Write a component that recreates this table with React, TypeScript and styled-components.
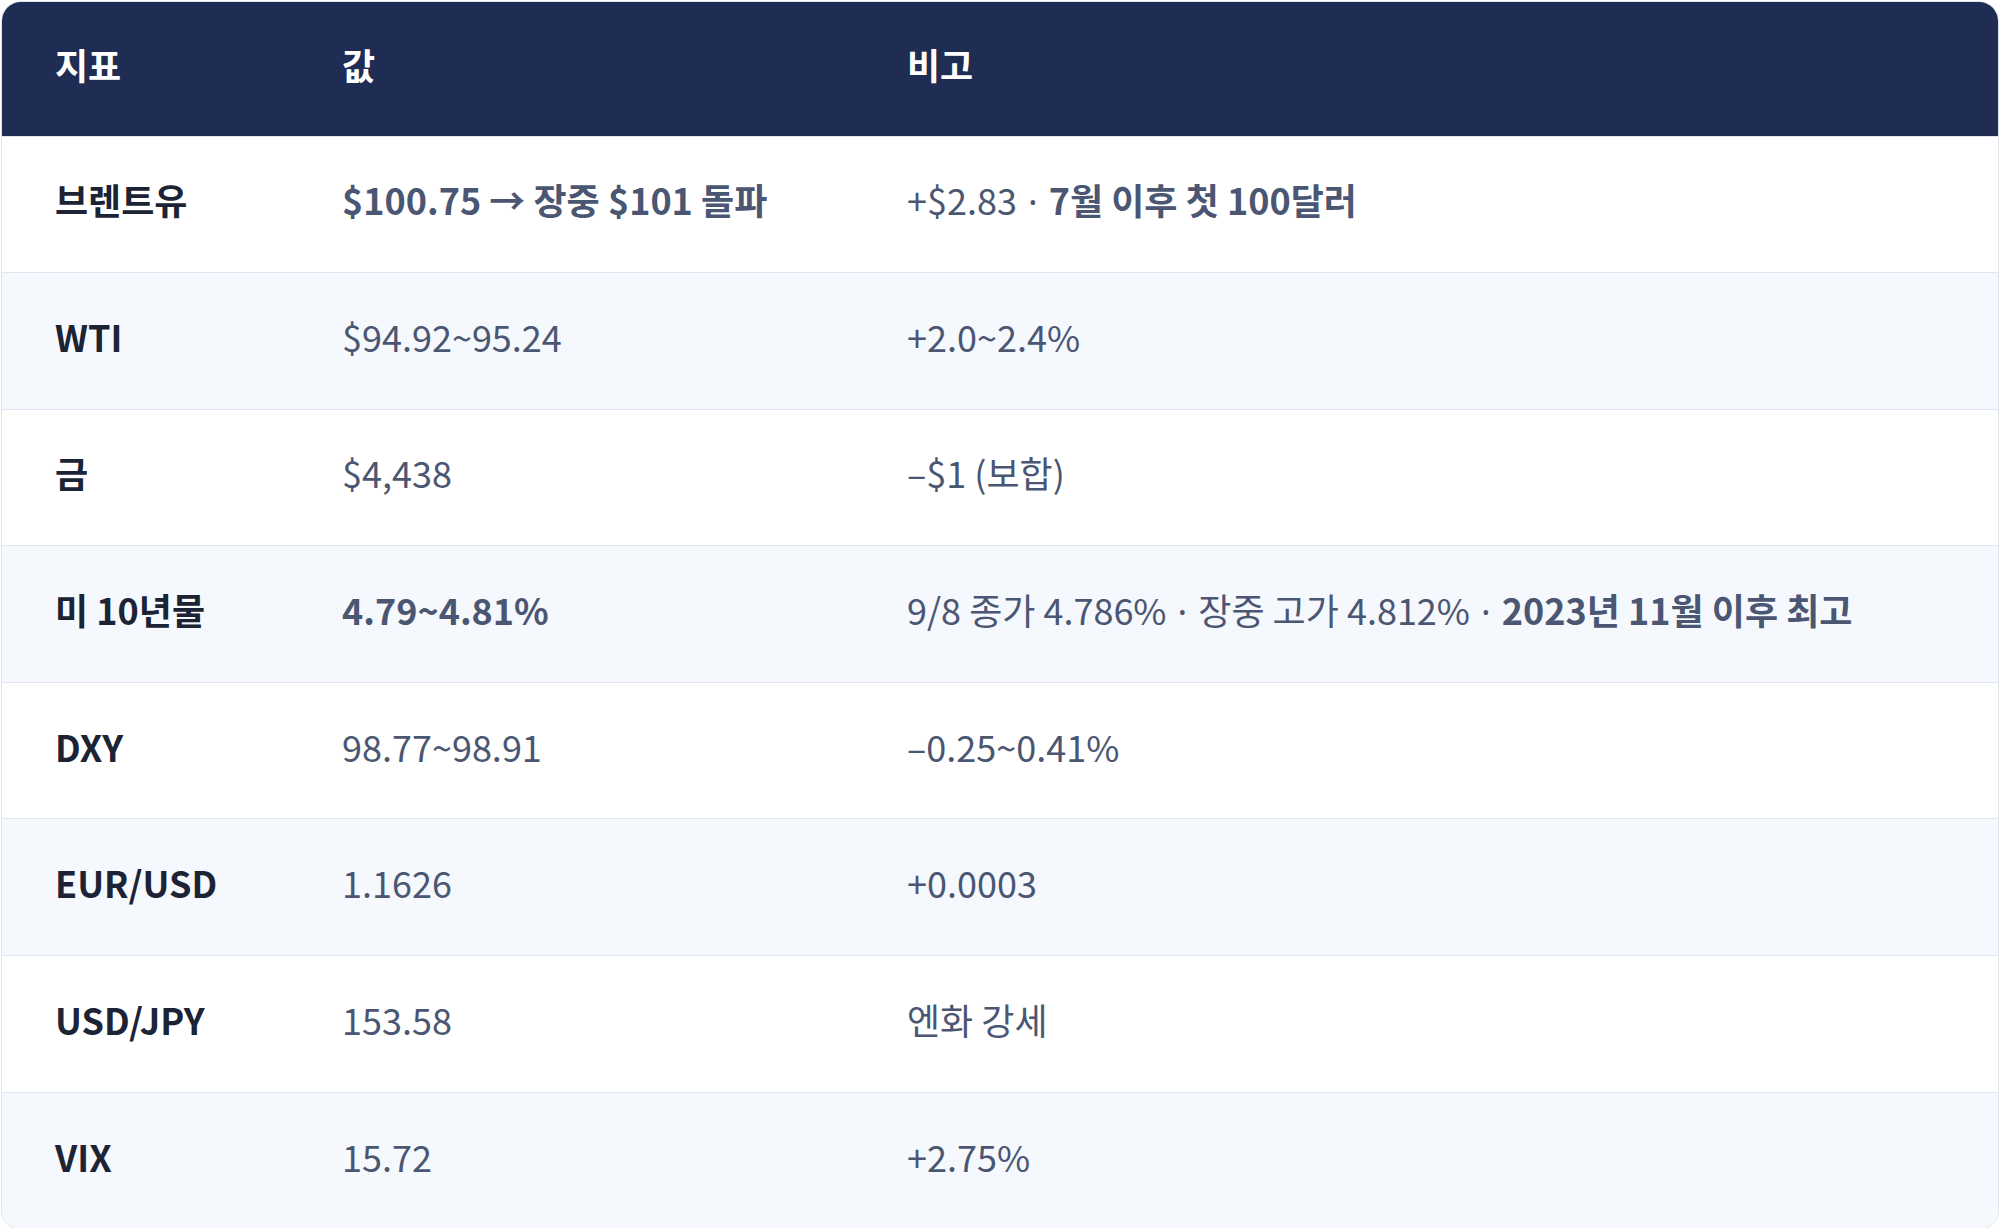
import React from "react";
import styled, { createGlobalStyle } from "styled-components";

const Global = createGlobalStyle`
  html, body { margin: 0; padding: 0; background: #ffffff; }
  body { font-family: "Noto Sans CJK KR", "Noto Sans", sans-serif; }
`;

const Frame = styled.div`
  margin: 1px 1px 1px 1px;
  border: 1px solid #dfe5ef;
  border-radius: 20px;
  overflow: hidden;
  background: #ffffff;
`;

const Table = styled.table`
  width: 100%;
  border-collapse: collapse;
  table-layout: fixed;
`;

const HeadCell = styled.th<{ $w?: string }>`
  ${(p) => (p.$w ? `width: ${p.$w};` : "")}
  box-sizing: border-box;
  height: 134px;
  padding: 0 0 10px 53px;
  background: #1f2c53;
  color: #ffffff;
  text-align: left;
  font-size: 36px;
  font-weight: 700;
  vertical-align: middle;
`;

const Row = styled.tr<{ $alt: boolean }>`
  background: ${(p) => (p.$alt ? "#f5f8fd" : "#ffffff")};
  border-top: 1px solid #dfe5ef;
`;

const NameCell = styled.td`
  box-sizing: border-box;
  height: 136.6px;
  padding: 0 0 10px 53px;
  color: #1b2334;
  font-size: 36px;
  font-weight: 700;
  vertical-align: middle;
  white-space: nowrap;
`;

const ValueCell = styled.td<{ $bold?: boolean }>`
  box-sizing: border-box;
  height: 136.6px;
  padding: 0 0 10px 53px;
  color: #4a5672;
  font-size: 36px;
  font-weight: ${(p) => (p.$bold ? 700 : 400)};
  vertical-align: middle;
  white-space: nowrap;
`;

const Strong = styled.strong`
  font-weight: 700;
`;

const Dot = styled.span`
  font-family: "Noto Sans", sans-serif;
  font-weight: 400;
  margin: 0 3px;
`;

type Item = {
  name: string;
  value: string;
  valueBold?: boolean;
  note: React.ReactNode;
};

const items: Item[] = [
  {
    name: "브렌트유",
    value: "$100.75 → 장중 $101 돌파",
    valueBold: true,
    note: (
      <>
        +$2.83 <Dot>·</Dot> <Strong>7월 이후 첫 100달러</Strong>
      </>
    ),
  },
  { name: "WTI", value: "$94.92~95.24", note: "+2.0~2.4%" },
  { name: "금", value: "$4,438", note: "–$1 (보합)" },
  {
    name: "미 10년물",
    value: "4.79~4.81%",
    valueBold: true,
    note: (
      <>
        9/8 종가 4.786% <Dot>·</Dot> 장중 고가 4.812% <Dot>·</Dot>{" "}
        <Strong>2023년 11월 이후 최고</Strong>
      </>
    ),
  },
  { name: "DXY", value: "98.77~98.91", note: "–0.25~0.41%" },
  { name: "EUR/USD", value: "1.1626", note: "+0.0003" },
  { name: "USD/JPY", value: "153.58", note: "엔화 강세" },
  { name: "VIX", value: "15.72", note: "+2.75%" },
];

export default function App() {
  return (
    <>
      <Global />
      <Frame>
        <Table>
          <thead>
            <tr>
              <HeadCell $w="287px">지표</HeadCell>
              <HeadCell $w="565px">값</HeadCell>
              <HeadCell>비고</HeadCell>
            </tr>
          </thead>
          <tbody>
            {items.map((it, i) => (
              <Row key={it.name} $alt={i % 2 === 1}>
                <NameCell>{it.name}</NameCell>
                <ValueCell $bold={it.valueBold}>{it.value}</ValueCell>
                <ValueCell>{it.note}</ValueCell>
              </Row>
            ))}
          </tbody>
        </Table>
      </Frame>
    </>
  );
}
